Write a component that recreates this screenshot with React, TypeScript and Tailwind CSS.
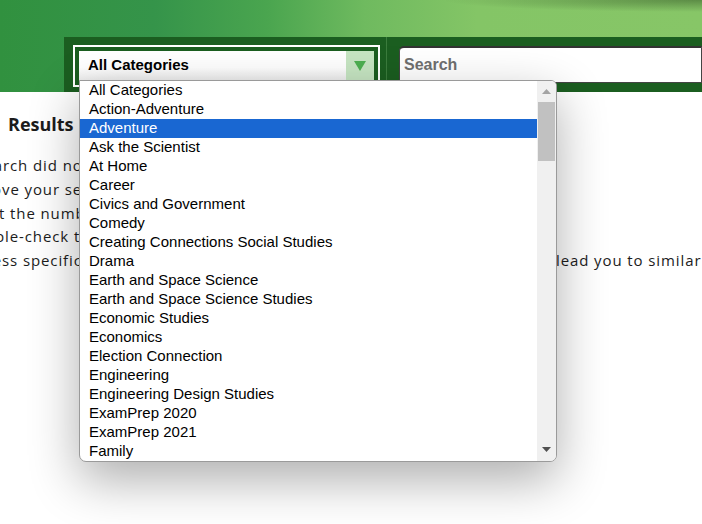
import React from "react";

const items = [
  "All Categories",
  "Action-Adventure",
  "Adventure",
  "Ask the Scientist",
  "At Home",
  "Career",
  "Civics and Government",
  "Comedy",
  "Creating Connections Social Studies",
  "Drama",
  "Earth and Space Science",
  "Earth and Space Science Studies",
  "Economic Studies",
  "Economics",
  "Election Connection",
  "Engineering",
  "Engineering Design Studies",
  "ExamPrep 2020",
  "ExamPrep 2021",
  "Family",
];

function Line({ x, pre, rest }: { x: number; pre: string; rest: React.ReactNode }) {
  return (
    <div className="flex whitespace-nowrap h-[23.75px] leading-[23.75px]">
      <div className="relative shrink-0" style={{ width: Math.max(x, 0), marginLeft: Math.min(x, 0) }}>
        <span className="absolute right-0 top-0">{pre}</span>
      </div>
      {rest}
    </div>
  );
}

export default function App() {
  return (
    <div className="relative w-[702px] h-[524px] overflow-hidden bg-white">
      {/* header */}
      <div className="h-[92px] bg-[radial-gradient(ellipse_260px_12px_at_100%_0,rgba(40,70,30,0.45),rgba(0,0,0,0)),linear-gradient(90deg,#31913f_0%,#35944a_22%,#4aa54f_38%,#6fba5f_52%,#84c566_68%,#87c667_100%)] pt-[37px]">
        <div className="ml-[64px] h-[55px] bg-[#1b5e20] flex items-start">
          <div className="mt-[8px] ml-[9px] w-[307px] h-[42px] border-2 border-white p-[4px]">
            <div className="h-[30px] flex bg-[linear-gradient(180deg,#ffffff_0%,#ffffff_55%,#ececec_100%)]">
              <div className="flex-1 pl-[9px] pb-[2px] flex items-center text-[15px] font-bold text-black font-['Liberation_Sans',Arial,sans-serif]">
                All Categories
              </div>
              <div className="w-[28px] bg-[#c6e5c2] flex items-center justify-center">
                <svg width="12" height="10" viewBox="0 0 12 10">
                  <polygon points="0,0 12,0 6,10" fill="#4caf50" />
                </svg>
              </div>
            </div>
          </div>
          <div className="ml-[6px] w-px h-full bg-[#3b7c3d]" />
          <div className="ml-[12px] mt-[9px] flex-1 h-[37px] bg-white border border-[#444] border-t-2 border-t-[#333] rounded-tl-[5px] flex items-center pl-[4px] text-[16px] font-bold text-[#6f6f6f] font-['Liberation_Sans',Arial,sans-serif]">
            Search
          </div>
        </div>
      </div>

      {/* content */}
      <div className="font-['Open_Sans',sans-serif] text-[#1c1c1c]">
        <div className="mt-[20px] ml-[8px] text-[18px] font-bold leading-[24px]">Results</div>
        <div className="mt-[18px] text-[15px] tracking-[0.9px]">
          <Line x={3} pre="Your sea" rest={<span>rch did not match any results.</span>} />
          <Line x={2} pre="To impro" rest={<span>ve your search, you may:</span>} />
          <Line x={-1} pre="Limi" rest={<span>t the number of keywords you use.</span>} />
          <Line x={5} pre="Doub" rest={<span>le-check the spelling of your keywords.</span>} />
          <Line
            x={2}
            pre="Use le"
            rest={
              <>
                <div className="shrink-0 w-[554px] overflow-hidden">ss specific terms; broader keywords may</div>
                <span>lead you to similar results.</span>
              </>
            }
          />
        </div>
      </div>

      {/* dropdown list */}
      <div className="absolute left-[79px] top-[80px] w-[478px] h-[382px] bg-white border border-[#9a9a9a] rounded-tr-[6px] rounded-b-[7px] overflow-hidden shadow-[0_18px_50px_rgba(0,0,0,0.32)] flex font-['Liberation_Sans',Arial,sans-serif]">
        <div className="flex-1">
          {items.map((it, i) => (
            <div
              key={it}
              className={
                "h-[19px] leading-[17px] pl-[9px] text-[15px] whitespace-nowrap " +
                (i === 2 ? "bg-[#1967d2] text-white" : "text-black")
              }
            >
              {it}
            </div>
          ))}
        </div>
        <div className="w-[19px] bg-[#f0f0f0] flex flex-col items-center">
          <div className="h-[21px] flex items-center justify-center">
            <svg width="9" height="5" viewBox="0 0 9 5">
              <polygon points="0,5 9,5 4.5,0" fill="#a3a3a3" />
            </svg>
          </div>
          <div className="w-[17px] h-[59px] bg-[#c1c1c1]" />
          <div className="flex-1" />
          <div className="h-[21px] flex items-center justify-center mb-[1px]">
            <svg width="9" height="5" viewBox="0 0 9 5">
              <polygon points="0,0 9,0 4.5,5" fill="#505050" />
            </svg>
          </div>
        </div>
      </div>
    </div>
  );
}
